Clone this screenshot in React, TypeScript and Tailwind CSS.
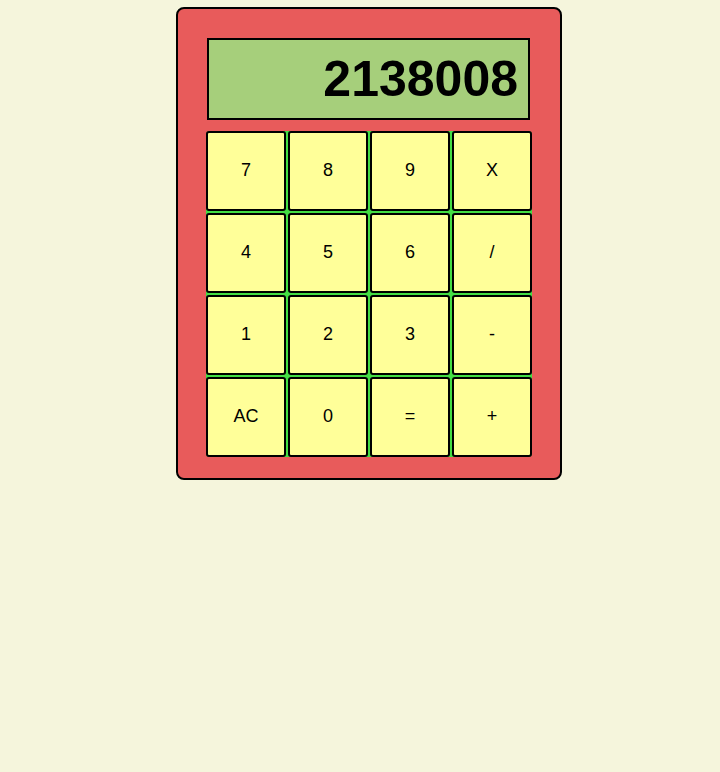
import React from "react";

const keys = ["7", "8", "9", "X", "4", "5", "6", "/", "1", "2", "3", "-", "AC", "0", "=", "+"];

export default function App() {
  return (
    <div className="min-h-[772px] w-full bg-[#f5f5dc] pt-[7px]" style={{ fontFamily: '"Liberation Sans", Arial, sans-serif' }}>
      <div className="ml-[176px] w-[386px] h-[473px] rounded-[8px] border-2 border-black bg-[#e85b5b] pt-[29px] pl-[29px]">
        <div className="w-[323px] h-[82px] border-2 border-black bg-[#a6cf7b] flex items-center justify-end pr-[10px]">
          <span className="text-[50px] font-bold leading-none text-black">2138008</span>
        </div>
        <div className="mt-[11px] -ml-px w-[326px] grid grid-cols-4 gap-[2px] bg-[#44dd44] rounded-[4px]">
          {keys.map((k) => (
            <div
              key={k}
              className="h-[80px] border-2 border-black rounded-[3px] bg-[#ffff99] flex items-center justify-center text-[18px] leading-none pb-[2px] text-black"
            >
              {k}
            </div>
          ))}
        </div>
      </div>
    </div>
  );
}
